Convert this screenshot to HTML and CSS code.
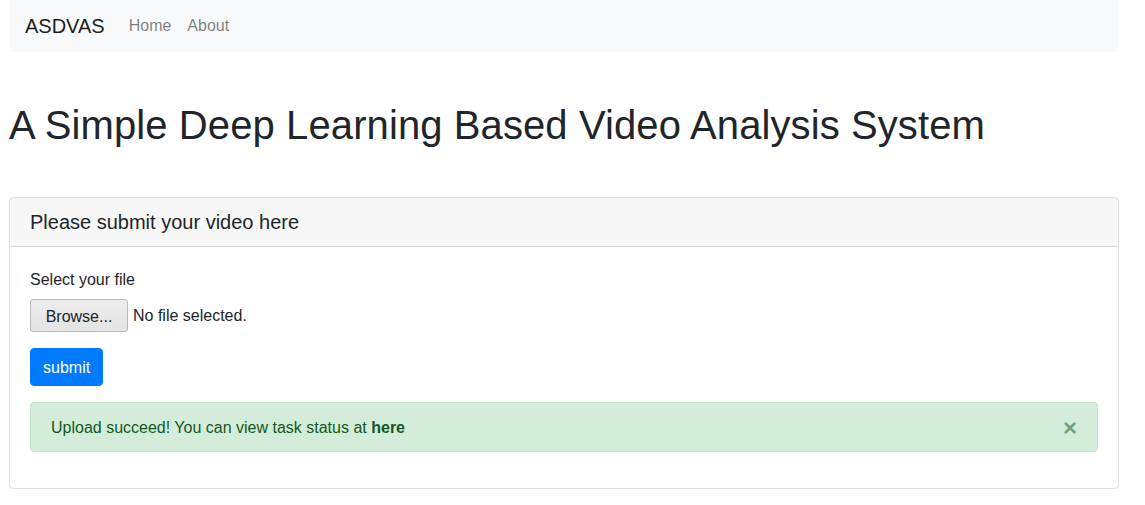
FILE: index.html
```html
<!DOCTYPE html>
<html lang="en">
<head>
<meta charset="utf-8">
<title>ASDVAS</title>
<link rel="stylesheet" href="styles.css">
</head>
<body>
<div class="page">
  <nav class="navbar">
    <a class="brand" href="#">ASDVAS</a>
    <a class="nav-link" href="#">Home</a>
    <a class="nav-link" href="#">About</a>
  </nav>
  <h1 class="title">A Simple Deep Learning Based Video Analysis System</h1>
  <div class="card">
    <div class="card-header">Please submit your video here</div>
    <div class="card-body">
      <div class="label">Select your file</div>
      <div class="file-row">
        <button class="browse" type="button">Browse...</button>
        <span class="file-status">No file selected.</span>
      </div>
      <button class="btn-submit" type="button">submit</button>
      <div class="alert">
        <span>Upload succeed! You can view task status at <b>here</b></span>
        <span class="close">&times;</span>
      </div>
    </div>
  </div>
</div>
</body>
</html>
```
FILE: styles.css
```css
* { box-sizing: border-box; }
body {
  margin: 0;
  font-family: "Liberation Sans", Arial, sans-serif;
  font-size: 16px;
  line-height: 1.5;
  color: #212529;
  background: #fff;
}
.page {
  width: 1110px;
  margin-left: 9px;
}
.navbar {
  height: 52px;
  background: #f8f9fa;
  display: flex;
  align-items: center;
  padding: 0 16px;
}
.brand {
  font-size: 20px;
  color: rgba(0,0,0,.9);
  text-decoration: none;
  margin-right: 16px;
}
.nav-link {
  color: rgba(0,0,0,.5);
  text-decoration: none;
  padding: 0 8px;
}
.title {
  font-size: 40px;
  font-weight: 400;
  line-height: 1.2;
  letter-spacing: 0.1px;
  margin: 49px 0 48px;
}
.card {
  border: 1px solid rgba(0,0,0,.125);
  border-radius: 4px;
}
.card-header {
  background: rgba(0,0,0,.03);
  border-bottom: 1px solid rgba(0,0,0,.125);
  padding: 10px 20px;
  font-size: 20px;
  line-height: 1.4;
}
.card-body {
  padding: 20px;
}
.label {
  margin-top: 1px;
  margin-bottom: 7px;
}
.file-row {
  display: flex;
  align-items: center;
  gap: 5px;
  margin-bottom: 16px;
}
.file-status {
  padding-top: 1px;
}
.browse {
  font-family: inherit;
  font-size: 16px;
  color: #212529;
  background: linear-gradient(#ececec, #e4e4e4);
  border: 1px solid #b9b9b9;
  border-radius: 3px;
  height: 33px;
  width: 98px;
  padding: 2px 0 0;
}
.btn-submit {
  font-family: inherit;
  font-size: 16px;
  color: #fff;
  background: #007bff;
  border: 1px solid #007bff;
  border-radius: 4px;
  padding: 7px 12px 5px;
  line-height: 1.5;
  display: block;
  margin-bottom: 16px;
}
.alert {
  background: #d4edda;
  border: 1px solid #c3e6cb;
  color: #155724;
  border-radius: 4px;
  padding: 13px 20px 11px;
  display: flex;
  justify-content: space-between;
  align-items: center;
  margin-bottom: 16px;
}
.alert b { font-weight: 700; }
.close {
  font-size: 24px;
  font-weight: 700;
  line-height: 1;
  opacity: .5;
  color: #155724;
  margin-right: 0;
}
```
